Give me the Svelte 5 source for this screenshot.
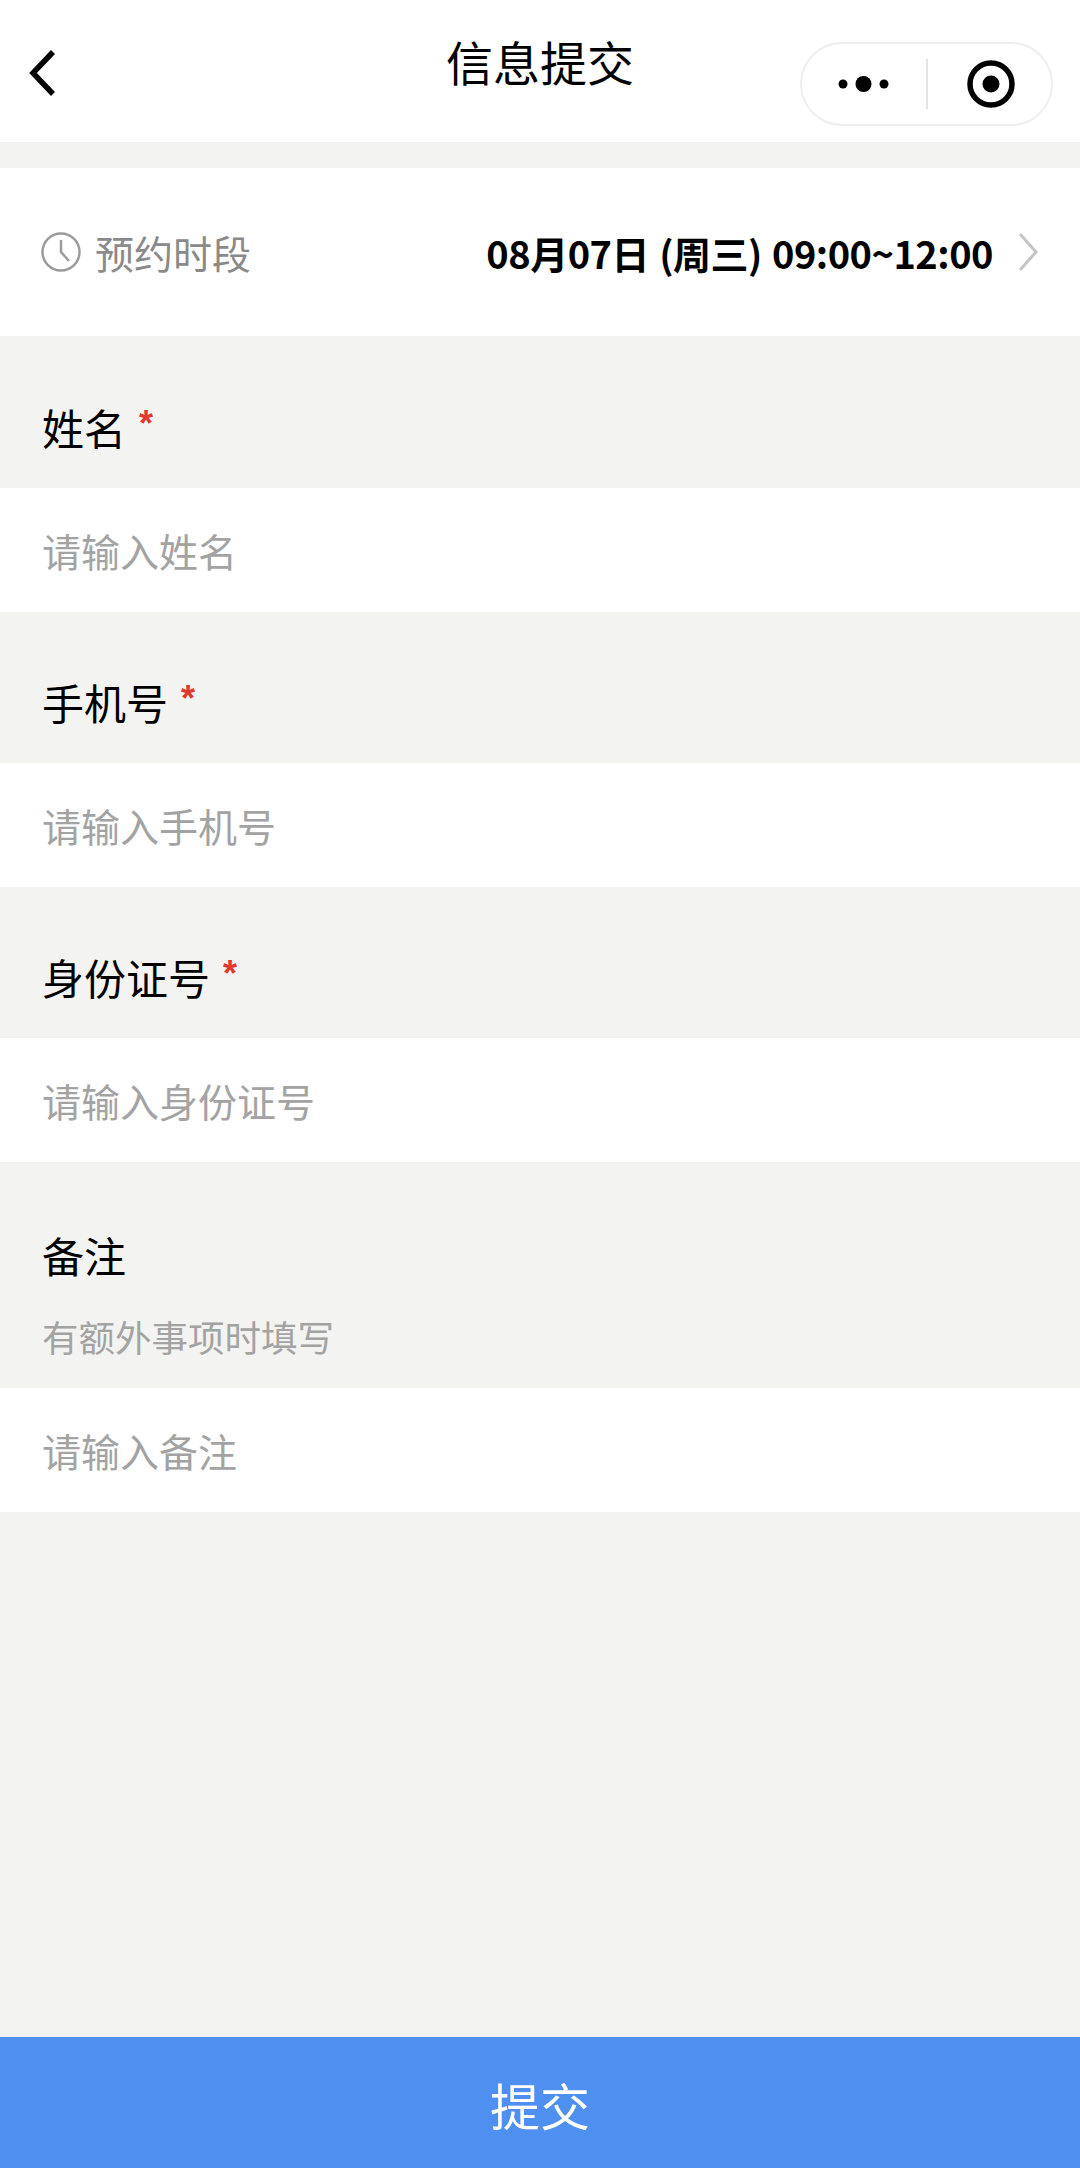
<script>
	const fields = [
		{ label: '姓名', required: true, placeholder: '请输入姓名', height: 152 },
		{ label: '手机号', required: true, placeholder: '请输入手机号', height: 151 },
		{ label: '身份证号', required: true, placeholder: '请输入身份证号', height: 151 },
		{ label: '备注', hint: '有额外事项时填写', placeholder: '请输入备注', height: 226 }
	];
</script>

<div class="page">
	<header class="nav">
		<svg class="back" width="30" height="46" viewBox="0 0 30 46" aria-hidden="true">
			<path d="M25 2 5 23l20 21" fill="none" stroke="#000" stroke-width="5.500" />
		</svg>
		<h1 class="title">信息提交</h1>
		<div class="capsule">
			<div class="capsule-side">
				<svg width="52" height="18" viewBox="0 0 52 18" aria-hidden="true">
					<circle cx="5" cy="9" r="4.500" />
					<circle cx="25.500" cy="9" r="8" />
					<circle cx="46" cy="9" r="4.500" />
				</svg>
			</div>
			<span class="capsule-line"></span>
			<div class="capsule-side">
				<svg class="record" width="48" height="48" viewBox="0 0 48 48" aria-hidden="true">
					<circle cx="24" cy="24" r="21" fill="none" stroke="#000" stroke-width="5.500" />
					<circle cx="24" cy="24" r="8.500" />
				</svg>
			</div>
		</div>
	</header>

	<section class="slot">
		<div class="slot-label">
			<svg width="40" height="40" viewBox="0 0 40 40" aria-hidden="true">
				<circle cx="20" cy="20" r="18.500" fill="none" stroke="#9c9c9c" stroke-width="2.500" />
				<path d="M20 8v12l8 9" fill="none" stroke="#9c9c9c" stroke-width="2.500" />
			</svg>
			<span>预约时段</span>
		</div>
		<div class="slot-value">
			<span>08月07日 (周三) 09:00~12:00</span>
			<svg width="22" height="40" viewBox="0 0 22 40" aria-hidden="true">
				<path d="m3 2 16 18L3 38" fill="none" stroke="#c4c4c4" stroke-width="3" />
			</svg>
		</div>
	</section>

	{#each fields as field}
		<div class="field-head" class:has-hint={field.hint} style="height: {field.height}px">
			<div class="label">
				<span>{field.label}</span>
				{#if field.required}<span class="star">*</span>{/if}
			</div>
			{#if field.hint}<div class="hint">{field.hint}</div>{/if}
		</div>
		<div class="field-input">{field.placeholder}</div>
	{/each}

	<div class="spacer"></div>
	<button class="submit" type="button">提交</button>
</div>

<style>
	:global(body) {
		margin: 0;
		background: #f3f3f1;
	}

	.page {
		display: flex;
		flex-direction: column;
		height: 2168px;
		background: #f3f3f1;
		font-family: "Noto Sans CJK SC", "Noto Sans", sans-serif;
		color: #000;
	}

	.nav {
		position: relative;
		flex: none;
		display: flex;
		align-items: center;
		justify-content: center;
		height: 142px;
		margin-bottom: 26px;
		background: #fff;
	}

	.back {
		position: absolute;
		left: 28px;
		top: 50px;
	}

	.title {
		margin: 0 0 20px;
		font-size: 47px;
		font-weight: 400;
		line-height: 60px;
	}

	.capsule {
		position: absolute;
		right: 27px;
		top: 42px;
		display: flex;
		align-items: center;
		box-sizing: border-box;
		width: 253px;
		height: 84px;
		border: 2px solid #eeeeee;
		border-radius: 42px;
	}

	.capsule-side {
		flex: 1;
		display: flex;
		align-items: center;
		justify-content: center;
	}

	.record {
		margin-left: 3px;
	}

	.capsule-line {
		flex: none;
		width: 2px;
		height: 50px;
		background: #e4e4e4;
	}

	.slot {
		flex: none;
		display: flex;
		align-items: center;
		justify-content: space-between;
		box-sizing: border-box;
		height: 168px;
		padding: 0 41px 0 41px;
		background: #fff;
	}

	.slot-label {
		display: flex;
		align-items: center;
		gap: 14px;
		font-size: 39px;
		color: #8a8a8a;
	}

	.slot-value {
		display: flex;
		align-items: center;
		gap: 24px;
		font-size: 38px;
		font-weight: 700;
		letter-spacing: -0.5px;
		word-spacing: 2px;
	}

	.field-head {
		flex: none;
		display: flex;
		flex-direction: column;
		justify-content: flex-end;
		box-sizing: border-box;
		padding: 0 42px 31px;
	}

	.field-head.has-hint {
		padding-bottom: 26px;
	}

	.label {
		display: flex;
		align-items: flex-start;
		gap: 13px;
		font-size: 42px;
		line-height: 60px;
	}

	.star {
		color: #e0382f;
		font-family: "Liberation Sans", sans-serif;
		font-size: 36px;
		font-weight: 700;
		line-height: 54px;
	}

	.hint {
		margin-top: 27px;
		font-size: 36.500px;
		line-height: 50px;
		color: #a3a3a3;
	}

	.field-input {
		flex: none;
		height: 124px;
		padding: 0 42px;
		background: #fff;
		font-size: 39px;
		line-height: 124px;
		color: #a3a3a3;
	}

	.spacer {
		flex: 1;
	}

	.submit {
		flex: none;
		height: 131px;
		padding: 2px 0 0;
		border: none;
		background: #4f8fef;
		color: #fff;
		font-family: inherit;
		font-size: 50px;
	}
</style>
